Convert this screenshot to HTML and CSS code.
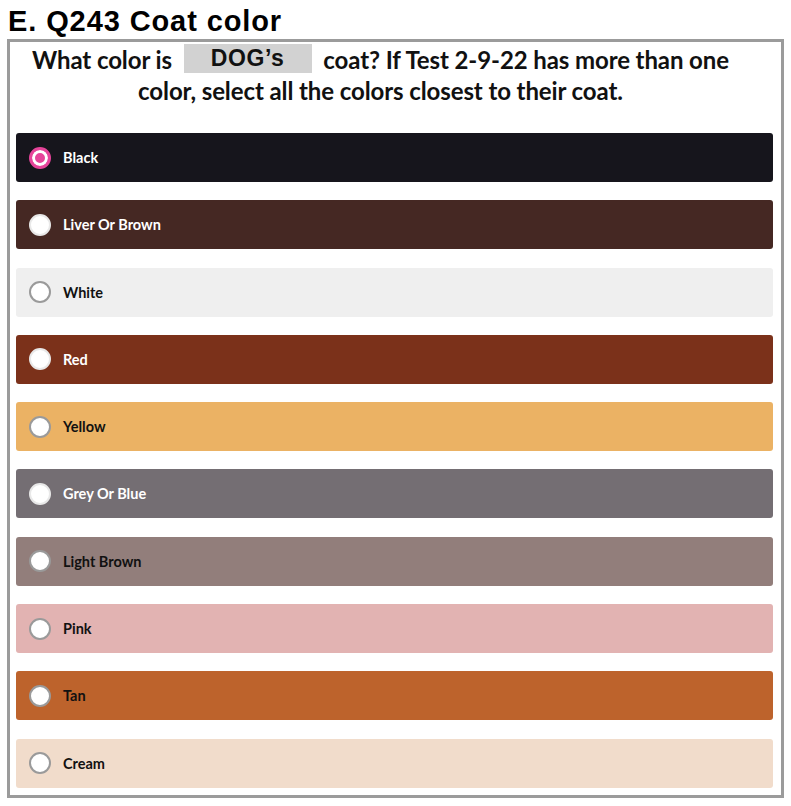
FILE: index.html
```html
<!DOCTYPE html>
<html>
<head>
<meta charset="utf-8">
<link rel="stylesheet" href="styles.css">
</head>
<body>
<h1 class="title">E. Q243 Coat color</h1>
<div class="card">
  <p class="question">What color is <span class="pet">DOG’s</span> coat? If Test 2-9-22 has more than one<br>color, select all the colors closest to their coat.</p>
  <div class="options">
    <label class="opt black light-text"><span class="radio selected"></span>Black</label>
    <label class="opt liver light-text"><span class="radio"></span>Liver Or Brown</label>
    <label class="opt white"><span class="radio"></span>White</label>
    <label class="opt red light-text"><span class="radio"></span>Red</label>
    <label class="opt yellow"><span class="radio"></span>Yellow</label>
    <label class="opt grey light-text"><span class="radio"></span>Grey Or Blue</label>
    <label class="opt lbrown"><span class="radio"></span>Light Brown</label>
    <label class="opt pink"><span class="radio"></span>Pink</label>
    <label class="opt tan"><span class="radio"></span>Tan</label>
    <label class="opt cream"><span class="radio"></span>Cream</label>
  </div>
</div>
</body>
</html>
```
FILE: styles.css
```css
html, body { margin: 0; padding: 0; background: #fff; }
body { width: 791px; height: 806px; overflow: hidden; }
.title {
  margin: 4px 0 0 8px;
  font-family: "Liberation Sans", Arial, sans-serif;
  font-weight: bold;
  font-size: 29px;
  letter-spacing: 0.9px;
  line-height: 35px;
  color: #000;
}
.card {
  margin: 0 7px;
  border: 3px solid #9b9b9b;
  padding: 2px 8px 13px 6px;
  height: 759px;
  box-sizing: border-box;
}
.question {
  margin: 0;
  padding-right: 28px;
  text-align: center;
  font-family: Lato, "Open Sans", sans-serif;
  font-weight: bold;
  font-size: 24px;
  letter-spacing: -0.1px;
  line-height: 31px;
  color: #111;
}
.pet {
  display: inline-block;
  width: 128px;
  height: 29px;
  line-height: 29px;
  margin: 0 6px;
  background: #d2d2d2;
  font-family: "Liberation Sans", Arial, sans-serif;
  font-size: 23px;
  letter-spacing: 0.6px;
  vertical-align: top;
}
.options {
  margin-top: 27px;
  display: flex;
  flex-direction: column;
  gap: 18.3px;
}
.opt {
  display: flex;
  align-items: center;
  height: 49px;
  border-radius: 3px;
  padding-left: 13px;
  font-family: Lato, "Open Sans", sans-serif;
  font-weight: bold;
  font-size: 14.5px;
  color: #111;
  box-sizing: border-box;
}
.light-text { color: #fff; }
.radio {
  width: 22px;
  height: 22px;
  border-radius: 50%;
  background: #fff;
  border: 2px solid #9a9a9a;
  box-sizing: border-box;
  margin-right: 12px;
  flex: none;
}
.light-text .radio { border-color: #e8e8e8; }
.radio.selected {
  background: #e6449a;
  border: 3px solid #e6449a;
  box-shadow: inset 0 0 0 3px #fff;
}
.black { background: #16151c; }
.liver { background: #452823; }
.white { background: #efefef; }
.red { background: #7b311a; }
.yellow { background: #ebb264; }
.grey { background: #746e73; }
.lbrown { background: #927e7b; }
.pink { background: #e2b3b2; }
.tan { background: #bd632c; }
.cream { background: #f1dccb; }
```
